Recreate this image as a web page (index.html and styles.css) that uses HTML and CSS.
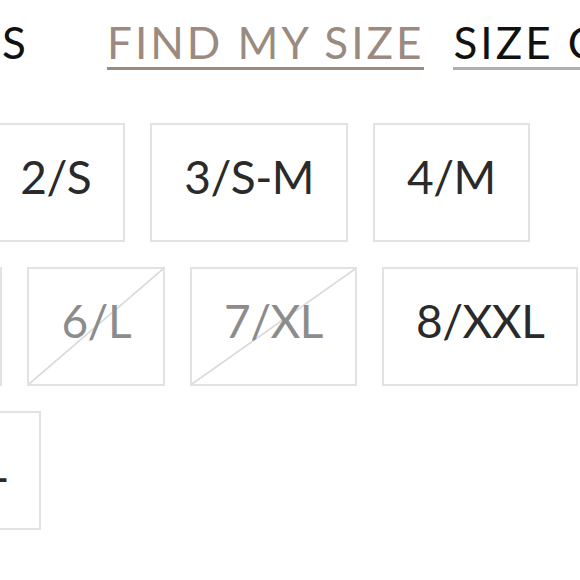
FILE: index.html
```html
<!DOCTYPE html>
<html>
<head>
<meta charset="utf-8">
<link rel="stylesheet" href="styles.css">
</head>
<body>
<div class="page">
  <div class="size-head">
    <span class="label">SIZES</span>
    <a class="link link-find" href="#">FIND MY SIZE</a>
    <a class="link link-chart" href="#">SIZE CHART</a>
  </div>
  <div class="sizes">
    <div class="row row-1">
      <button class="size">1/XS</button>
      <button class="size">2/S</button>
      <button class="size">3/S-M</button>
      <button class="size">4/M</button>
    </div>
    <div class="row row-2">
      <button class="size">5/M-L</button>
      <button class="size out">6/L</button>
      <button class="size out">7/XL</button>
      <button class="size">8/XXL</button>
    </div>
    <div class="row row-3">
      <button class="size">9/XXXL</button>
    </div>
  </div>
</div>
</body>
</html>
```
FILE: styles.css
```css
html, body {
  margin: 0;
  padding: 0;
  background: #fff;
}
body {
  font-family: Lato, "Noto Sans", sans-serif;
  overflow: hidden;
  width: 580px;
  height: 580px;
}
.page {
  padding-top: 20px;
}
.size-head {
  display: flex;
  align-items: flex-start;
  margin-left: -176px;
  white-space: nowrap;
  font-size: 44px;
  line-height: 44px;
  letter-spacing: 3px;
}
.label {
  flex: none;
  width: 205px;
  text-align: right;
  color: #111;
}
.link {
  flex: none;
  display: inline-block;
  text-decoration: none;
  border-bottom: 3px solid;
  padding-bottom: 3px;
}
.link-find {
  margin-left: 78px;
  color: #9a8a80;
  border-color: #9a8a80;
}
.link-chart {
  margin-left: 29px;
  color: #111;
  border-color: #b0b0b0;
}
.sizes {
  margin-left: -207px;
  margin-top: 53px;
  display: flex;
  flex-direction: column;
  gap: 25px;
}
.row {
  display: flex;
  gap: 25px;
}
.row-2 {
  margin-left: 13px;
}
.row-3 {
  margin-left: 22px;
}
.size {
  box-sizing: border-box;
  height: 119px;
  padding: 0 32px 12px;
  border: 2px solid #e2e2e2;
  background: #fff;
  font-family: inherit;
  font-size: 46px;
  letter-spacing: -0.5px;
  color: #2a2a2a;
  display: flex;
  align-items: center;
  justify-content: center;
  white-space: nowrap;
  flex: none;
}
.size.out {
  color: #8c8c8c;
  background: linear-gradient(to bottom right, transparent calc(50% - 1.2px), #dcdcdc calc(50% - 0.6px), #dcdcdc calc(50% + 0.6px), transparent calc(50% + 1.2px));
}
```
